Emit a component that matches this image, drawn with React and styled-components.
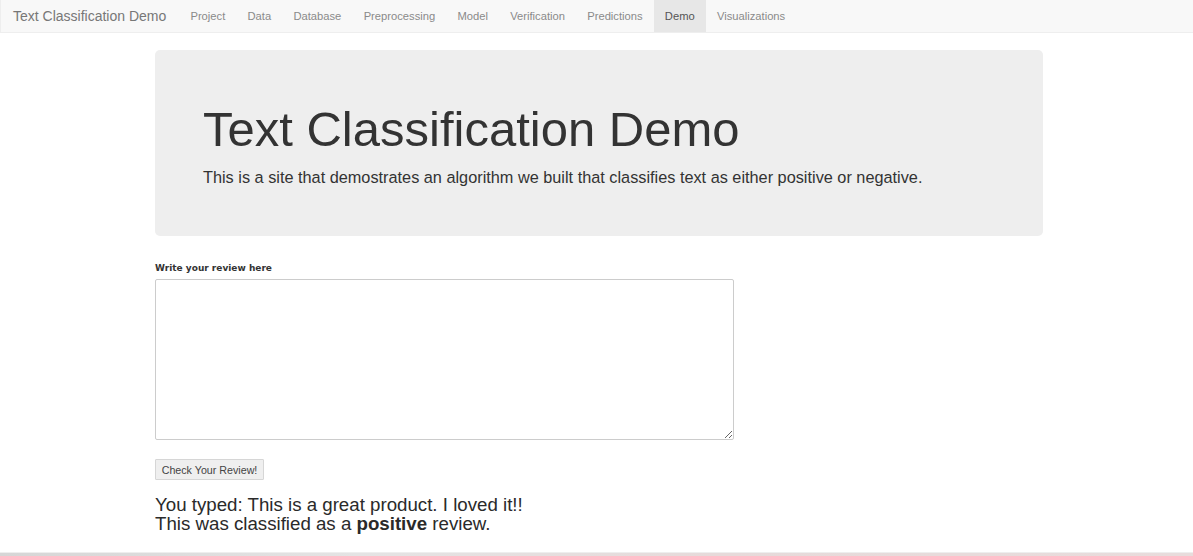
import React, { useState } from 'react';
import styled, { createGlobalStyle } from 'styled-components';

const GlobalStyle = createGlobalStyle`
    html, body {
        margin: 0;
        padding: 0;
        background: #fff;
        font-family: "Liberation Sans", Arial, sans-serif;
        color: #333;
    }
`;

const Page = styled.div`
    min-height: 100vh;
    display: flex;
    flex-direction: column;
`;

const Navbar = styled.nav`
    height: 33px;
    display: flex;
    align-items: stretch;
    background: #f8f8f8;
    border-bottom: 1px solid #eeeeee;
    border-left: 1px solid #eeeeee;
    box-sizing: border-box;
`;

const Brand = styled.div`
    display: flex;
    align-items: center;
    padding: 0 13px 0 12px;
    font-size: 14px;
    color: #777;
`;

const NavLink = styled.a`
    display: flex;
    align-items: center;
    padding: 0 11.15px;
    font-size: 11.2px;
    color: ${p => (p.$active ? '#555' : '#8a8a8a')};
    background: ${p => (p.$active ? '#e7e7e7' : 'transparent')};
    text-decoration: none;
    cursor: pointer;
`;

const Container = styled.main`
    width: 888px;
    margin: 17px 0 0 155px;
    display: flex;
    flex-direction: column;
`;

const Jumbotron = styled.section`
    background: #eeeeee;
    border-radius: 5px;
    height: 186px;
    box-sizing: border-box;
    padding: 49px 48px 0;
`;

const Heading = styled.h1`
    margin: 0;
    font-size: 49px;
    font-weight: 400;
    line-height: 60px;
    color: #333;
`;

const Lead = styled.p`
    margin: 8px 0 0;
    font-size: 16.3px;
    line-height: 20px;
    color: #333;
`;

const Form = styled.form`
    margin-top: 26px;
    display: flex;
    flex-direction: column;
    align-items: flex-start;
`;

const Label = styled.label`
    font-family: "DejaVu Sans", Verdana, sans-serif;
    font-size: 9px;
    font-weight: 700;
    color: #333;
    line-height: 12px;
`;

const TextArea = styled.textarea`
    margin-top: 5px;
    width: 579px;
    height: 161px;
    box-sizing: border-box;
    border: 1px solid #cccccc;
    border-radius: 2px;
    resize: both;
    font-family: inherit;
    outline: none;
`;

const Button = styled.button`
    margin-top: 19px;
    height: 21px;
    width: 109px;
    padding: 0;
    font-family: inherit;
    font-size: 10.7px;
    color: #444;
    background: #efefef;
    border: 1px solid #d6d6d6;
    border-radius: 1px;
    cursor: pointer;
`;

const Result = styled.div`
    margin-top: 15px;
    font-size: 18.7px;
    line-height: 19px;
    color: #2a2a2a;
`;

const BottomStrip = styled.div`
    margin-top: auto;
    height: 3px;
    background: linear-gradient(to right, #d6d6d6 0%, #e4e4e4 30%, #e6dada 60%, #e8dcdc 100%);
    border-top: 1px solid #eeeeee;
`;

const links = ['Project', 'Data', 'Database', 'Preprocessing', 'Model', 'Verification', 'Predictions', 'Demo', 'Visualizations'];

const App = () => {
    const [review, setReview] = useState('');

    return (
        <Page>
            <GlobalStyle />
            <Navbar>
                <Brand>Text Classification Demo</Brand>
                {links.map(link => (
                    <NavLink key={link} $active={link === 'Demo'}>{link}</NavLink>
                ))}
            </Navbar>

            <Container>
                <Jumbotron>
                    <Heading>Text Classification Demo</Heading>
                    <Lead>This is a site that demostrates an algorithm we built that classifies text as either positive or negative.</Lead>
                </Jumbotron>

                <Form onSubmit={e => e.preventDefault()}>
                    <Label htmlFor="review">Write your review here</Label>
                    <TextArea id="review" value={review} onChange={e => setReview(e.target.value)} />
                    <Button type="submit">Check Your Review!</Button>
                </Form>

                <Result>
                    You typed: This is a great product. I loved it!!<br />
                    This was classified as a <b>positive</b> review.
                </Result>
            </Container>
            <BottomStrip />
        </Page>
    );
};

export default App;
